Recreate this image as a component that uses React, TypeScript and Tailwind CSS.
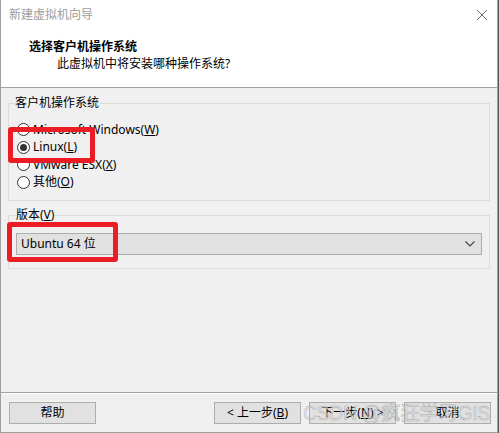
import React from "react";

const font = "font-['Noto_Sans','Noto_Sans_CJK_SC',sans-serif]";

function Radio({ checked, children }: { checked?: boolean; children: React.ReactNode }) {
  return (
    <div className="flex h-[17.5px] items-center">
      <span className="ml-[8px] flex h-[13px] w-[13px] items-center justify-center rounded-full border border-[#333] bg-white">
        {checked && <span className="h-[7px] w-[7px] rounded-full bg-[#333]" />}
      </span>
      <span className="ml-[3px] leading-[16px] text-black">{children}</span>
    </div>
  );
}

function Button({ children, className = "" }: { children: React.ReactNode; className?: string }) {
  return (
    <button
      className={`flex h-[22px] w-[87px] items-center justify-center border border-[#adadad] bg-[#e1e1e1] text-[12px] leading-[16px] text-black ${className}`}
    >
      {children}
    </button>
  );
}

export default function App() {
  return (
    <div className={`relative h-[433px] w-[499px] overflow-hidden bg-[#5a5a5a] ${font} text-[12px]`}>
      <div className="flex h-[433px] w-[498px] flex-col border-x border-b border-[#a0a0a0] bg-[#f0f0f0]">
        {/* header */}
        <div className="h-[88px] border-b border-[#a0a0a0] bg-white">
          <div className="flex h-[30px] items-center justify-between pl-[8px] pr-[8px]">
            <span className="leading-[16px] text-[#9b9b9b]">新建虚拟机向导</span>
            <svg width="12" height="12" viewBox="0 0 12 12" className="mr-[1px]">
              <path d="M1 1 L11 11 M11 1 L1 11" stroke="#6e6e6e" strokeWidth="1" fill="none" />
            </svg>
          </div>
          <div className="mt-[9px] pl-[28px] font-bold leading-[16px] text-black">选择客户机操作系统</div>
          <div className="mt-[1px] pl-[56px] leading-[16px] text-black">此虚拟机中将安装哪种操作系统?</div>
        </div>

        {/* body */}
        <div className="h-[304px] pl-[7px]">
          <fieldset className="mt-[7px] w-[482px] border border-[#dcdcdc] pb-[9px] pt-[10px]">
            <legend className="ml-[5px] px-[1px] leading-[16px] text-black">客户机操作系统</legend>
            <Radio>
              Microsoft Windows(<span className="underline">W</span>)
            </Radio>
            <Radio checked>
              Linux(<span className="underline">L</span>)
            </Radio>
            <Radio>
              VMware ESX(<span className="underline">X</span>)
            </Radio>
            <Radio>
              其他(<span className="underline">O</span>)
            </Radio>
          </fieldset>

          <fieldset className="mt-[6px] w-[482px] border border-[#dcdcdc] pb-[13px] pl-[7px] pr-[7px] pt-[10px]">
            <legend className="ml-[-1px] px-[1px] leading-[16px] text-black">
              版本(<span className="underline">V</span>)
            </legend>
            <div className="flex h-[22px] items-center justify-between border border-[#adadad] bg-[#e1e1e1] pl-[4px] pr-[6px]">
              <span className="leading-[16px] text-black">Ubuntu 64 位</span>
              <svg width="10" height="6" viewBox="0 0 10 6">
                <path d="M0.5 0.5 L5 5 L9.5 0.5" stroke="#444" strokeWidth="1.2" fill="none" />
              </svg>
            </div>
          </fieldset>
        </div>

        {/* footer */}
        <div className="flex flex-1 items-start border-t border-[#a0a0a0] pl-[8px] pt-[9px] shadow-[inset_0_1px_0_#fff]">
          <Button>帮助</Button>
          <Button className="ml-[118px]">
            &lt; 上一步(<span className="underline">B</span>)
          </Button>
          <Button className="ml-[8px]">
            下一步(<span className="underline">N</span>) &gt;
          </Button>
          <Button className="ml-[8px]">取消</Button>
        </div>
      </div>

      {/* red annotation frames */}
      <div className="absolute left-[8px] top-[127px] h-[36px] w-[87px] rounded-[3px] border-[5px] border-[#ec1c24]" />
      <div className="absolute left-[7px] top-[222px] h-[40px] w-[111px] rounded-[3px] border-[5px] border-[#ec1c24]" />

      {/* watermark */}
      <div
        className="absolute left-[303px] top-[401px] whitespace-nowrap font-['Liberation_Sans','Noto_Sans_CJK_SC',sans-serif] text-[19.5px] leading-[24px] tracking-[-0.4px] text-[#e6e6e6]/60"
        style={{ WebkitTextStroke: "0.5px rgba(130,130,130,0.6)" }}
      >
        CSDN @疯狂学习GIS
      </div>
    </div>
  );
}
